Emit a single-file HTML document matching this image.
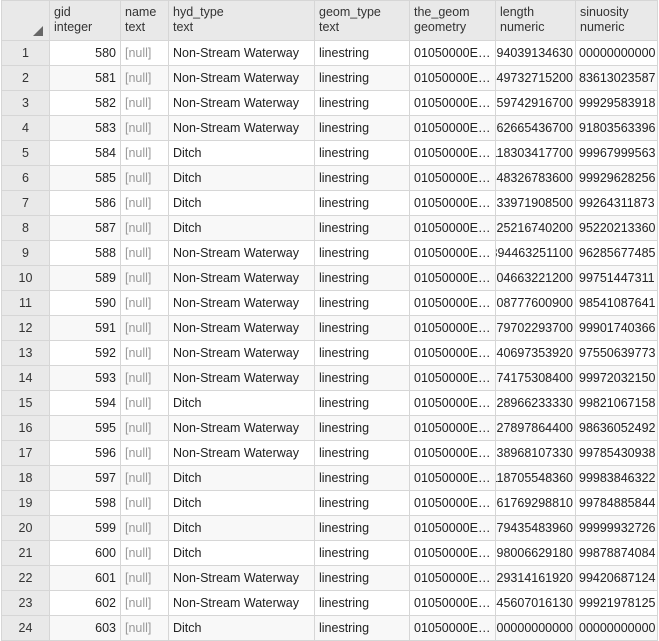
<!DOCTYPE html>
<html><head><meta charset="utf-8"><style>
html,body{margin:0;padding:0;background:#fff;width:659px;height:617px;overflow:hidden}
table{border-collapse:collapse;table-layout:fixed;font-family:"Liberation Sans",sans-serif;font-size:12.5px;color:#222;position:absolute;left:1px;top:0;width:656px}
td,th{border:1px solid #d6d6d6;height:24px;padding:0 4px;white-space:nowrap;overflow:hidden;text-overflow:clip;box-sizing:border-box}
td{height:25px}
th{background:#e9e9e9;height:40px;font-weight:normal;text-align:left;vertical-align:top;line-height:15px;padding-top:4px;color:#333}
td.n{background:#e9e9e9;text-align:center;color:#333}
td.r{text-align:right}
td.nl{color:#999}
td.c{direction:rtl;text-align:left;padding:0 2px}
td.s{padding:0 2px 0 3px}
tr:nth-child(even) td:not(.n){background:#f8f8f8}
.tri{position:absolute;left:33px;top:26px;width:0;height:0;border-left:10px solid transparent;border-bottom:10px solid #666}
</style></head><body>
<table>
<colgroup><col style="width:48px"><col style="width:71px"><col style="width:48px"><col style="width:146px"><col style="width:95px"><col style="width:86px"><col style="width:80px"><col style="width:82px"></colgroup>
<thead><tr><th></th><th>gid<br>integer</th><th>name<br>text</th><th>hyd_type<br>text</th><th>geom_type<br>text</th><th>the_geom<br>geometry</th><th>length<br>numeric</th><th>sinuosity<br>numeric</th></tr></thead>
<tbody>
<tr><td class="n">1</td><td class="r">580</td><td class="nl">[null]</td><td>Non-Stream Waterway</td><td>linestring</td><td>01050000E…</td><td class="c">394039134630</td><td class="s">00000000000</td></tr>
<tr><td class="n">2</td><td class="r">581</td><td class="nl">[null]</td><td>Non-Stream Waterway</td><td>linestring</td><td>01050000E…</td><td class="c">149732715200</td><td class="s">83613023587</td></tr>
<tr><td class="n">3</td><td class="r">582</td><td class="nl">[null]</td><td>Non-Stream Waterway</td><td>linestring</td><td>01050000E…</td><td class="c">359742916700</td><td class="s">99929583918</td></tr>
<tr><td class="n">4</td><td class="r">583</td><td class="nl">[null]</td><td>Non-Stream Waterway</td><td>linestring</td><td>01050000E…</td><td class="c">562665436700</td><td class="s">91803563396</td></tr>
<tr><td class="n">5</td><td class="r">584</td><td class="nl">[null]</td><td>Ditch</td><td>linestring</td><td>01050000E…</td><td class="c">118303417700</td><td class="s">99967999563</td></tr>
<tr><td class="n">6</td><td class="r">585</td><td class="nl">[null]</td><td>Ditch</td><td>linestring</td><td>01050000E…</td><td class="c">148326783600</td><td class="s">99929628256</td></tr>
<tr><td class="n">7</td><td class="r">586</td><td class="nl">[null]</td><td>Ditch</td><td>linestring</td><td>01050000E…</td><td class="c">333971908500</td><td class="s">99264311873</td></tr>
<tr><td class="n">8</td><td class="r">587</td><td class="nl">[null]</td><td>Ditch</td><td>linestring</td><td>01050000E…</td><td class="c">225216740200</td><td class="s">95220213360</td></tr>
<tr><td class="n">9</td><td class="r">588</td><td class="nl">[null]</td><td>Non-Stream Waterway</td><td>linestring</td><td>01050000E…</td><td class="c">394463251100</td><td class="s">96285677485</td></tr>
<tr><td class="n">10</td><td class="r">589</td><td class="nl">[null]</td><td>Non-Stream Waterway</td><td>linestring</td><td>01050000E…</td><td class="c">304663221200</td><td class="s">99751447311</td></tr>
<tr><td class="n">11</td><td class="r">590</td><td class="nl">[null]</td><td>Non-Stream Waterway</td><td>linestring</td><td>01050000E…</td><td class="c">308777600900</td><td class="s">98541087641</td></tr>
<tr><td class="n">12</td><td class="r">591</td><td class="nl">[null]</td><td>Non-Stream Waterway</td><td>linestring</td><td>01050000E…</td><td class="c">379702293700</td><td class="s">99901740366</td></tr>
<tr><td class="n">13</td><td class="r">592</td><td class="nl">[null]</td><td>Non-Stream Waterway</td><td>linestring</td><td>01050000E…</td><td class="c">140697353920</td><td class="s">97550639773</td></tr>
<tr><td class="n">14</td><td class="r">593</td><td class="nl">[null]</td><td>Non-Stream Waterway</td><td>linestring</td><td>01050000E…</td><td class="c">774175308400</td><td class="s">99972032150</td></tr>
<tr><td class="n">15</td><td class="r">594</td><td class="nl">[null]</td><td>Ditch</td><td>linestring</td><td>01050000E…</td><td class="c">228966233330</td><td class="s">99821067158</td></tr>
<tr><td class="n">16</td><td class="r">595</td><td class="nl">[null]</td><td>Non-Stream Waterway</td><td>linestring</td><td>01050000E…</td><td class="c">227897864400</td><td class="s">98636052492</td></tr>
<tr><td class="n">17</td><td class="r">596</td><td class="nl">[null]</td><td>Non-Stream Waterway</td><td>linestring</td><td>01050000E…</td><td class="c">338968107330</td><td class="s">99785430938</td></tr>
<tr><td class="n">18</td><td class="r">597</td><td class="nl">[null]</td><td>Ditch</td><td>linestring</td><td>01050000E…</td><td class="c">118705548360</td><td class="s">99983846322</td></tr>
<tr><td class="n">19</td><td class="r">598</td><td class="nl">[null]</td><td>Ditch</td><td>linestring</td><td>01050000E…</td><td class="c">561769298810</td><td class="s">99784885844</td></tr>
<tr><td class="n">20</td><td class="r">599</td><td class="nl">[null]</td><td>Ditch</td><td>linestring</td><td>01050000E…</td><td class="c">779435483960</td><td class="s">99999932726</td></tr>
<tr><td class="n">21</td><td class="r">600</td><td class="nl">[null]</td><td>Ditch</td><td>linestring</td><td>01050000E…</td><td class="c">398006629180</td><td class="s">99878874084</td></tr>
<tr><td class="n">22</td><td class="r">601</td><td class="nl">[null]</td><td>Non-Stream Waterway</td><td>linestring</td><td>01050000E…</td><td class="c">229314161920</td><td class="s">99420687124</td></tr>
<tr><td class="n">23</td><td class="r">602</td><td class="nl">[null]</td><td>Non-Stream Waterway</td><td>linestring</td><td>01050000E…</td><td class="c">445607016130</td><td class="s">99921978125</td></tr>
<tr><td class="n">24</td><td class="r">603</td><td class="nl">[null]</td><td>Ditch</td><td>linestring</td><td>01050000E…</td><td class="c">000000000000</td><td class="s">00000000000</td></tr>
</tbody></table>
<div class="tri"></div>
</body></html>
